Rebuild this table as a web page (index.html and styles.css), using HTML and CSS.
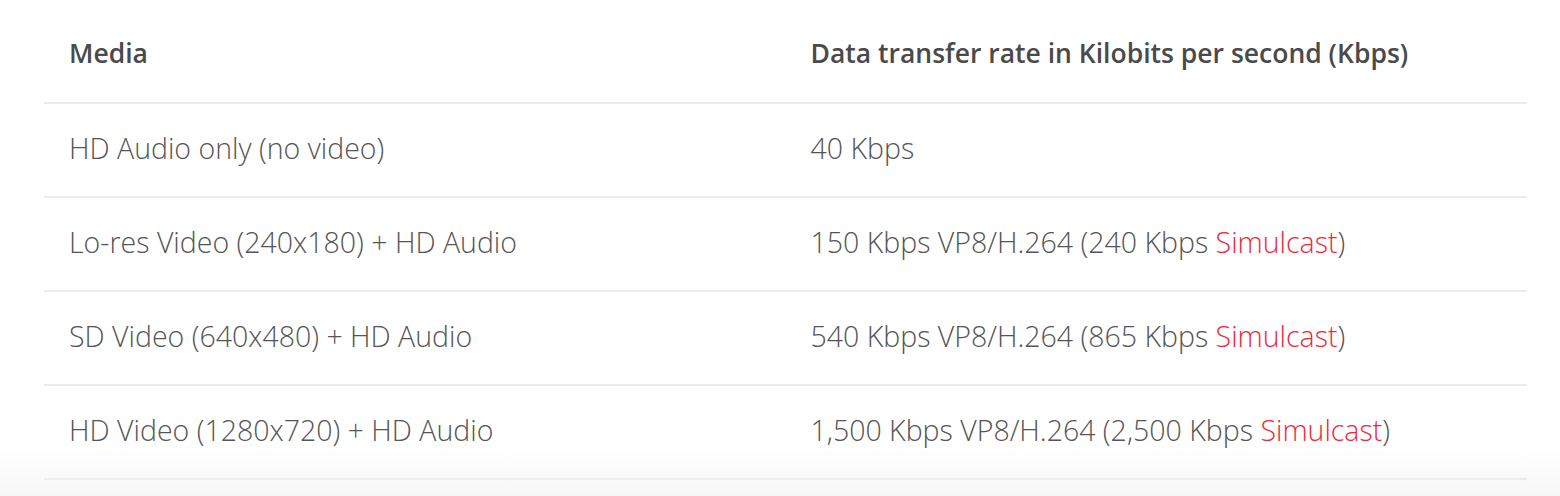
FILE: index.html
```html
<!DOCTYPE html>
<html lang="en">

<head>
      <meta charset="UTF-8">
      <meta name="viewport" content="width=device-width, initial-scale=1.0">
      <title>Media bandwidth</title>
      <link rel="stylesheet" href="styles.css">
</head>

<body>
      <div class="page">
            <table class="rates">
                  <thead>
                        <tr>
                              <th>Media</th>
                              <th>Data transfer rate in Kilobits per second (Kbps)</th>
                        </tr>
                  </thead>
                  <tbody>
                        <tr>
                              <td>HD Audio only (no video)</td>
                              <td>40 Kbps</td>
                        </tr>
                        <tr>
                              <td>Lo-res Video (240x180) + HD Audio</td>
                              <td>150 Kbps VP8/H.264 (240 Kbps <a href="#" class="link">Simulcast</a>)</td>
                        </tr>
                        <tr>
                              <td>SD Video (640x480) + HD Audio</td>
                              <td>540 Kbps VP8/H.264 (865 Kbps <a href="#" class="link">Simulcast</a>)</td>
                        </tr>
                        <tr>
                              <td>HD Video (1280x720) + HD Audio</td>
                              <td>1,500 Kbps VP8/H.264 (2,500 Kbps <a href="#" class="link">Simulcast</a>)</td>
                        </tr>
                  </tbody>
            </table>
      </div>
</body>

</html>
```

FILE: styles.css
```css
/* page */
html,
body {
      margin: 0;
      height: 100%;
}

body {
      background: linear-gradient(to bottom, #fff 0, #fff 448px, #f7f7f7 496px);
      font-family: "Open Sans", "Liberation Sans", sans-serif;
      color: #555;
}

div.page {
      padding: 0 33px 0 44px;
}

/* table */
table.rates {
      width: 100%;
      border-collapse: collapse;
      table-layout: fixed;
}

table.rates th,
table.rates td {
      text-align: left;
      padding: 0 25px;
      border-bottom: 2px solid #ececec;
}

table.rates th {
      height: 98px;
      padding-top: 4px;
      font-size: 26.5px;
      font-weight: 600;
      color: #4a4a4a;
}

table.rates td {
      height: 88px;
      padding-bottom: 4px;
      font-size: 28.5px;
      font-weight: 300;
}

a.link {
      color: #f0283c;
      text-decoration: none;
}
```
